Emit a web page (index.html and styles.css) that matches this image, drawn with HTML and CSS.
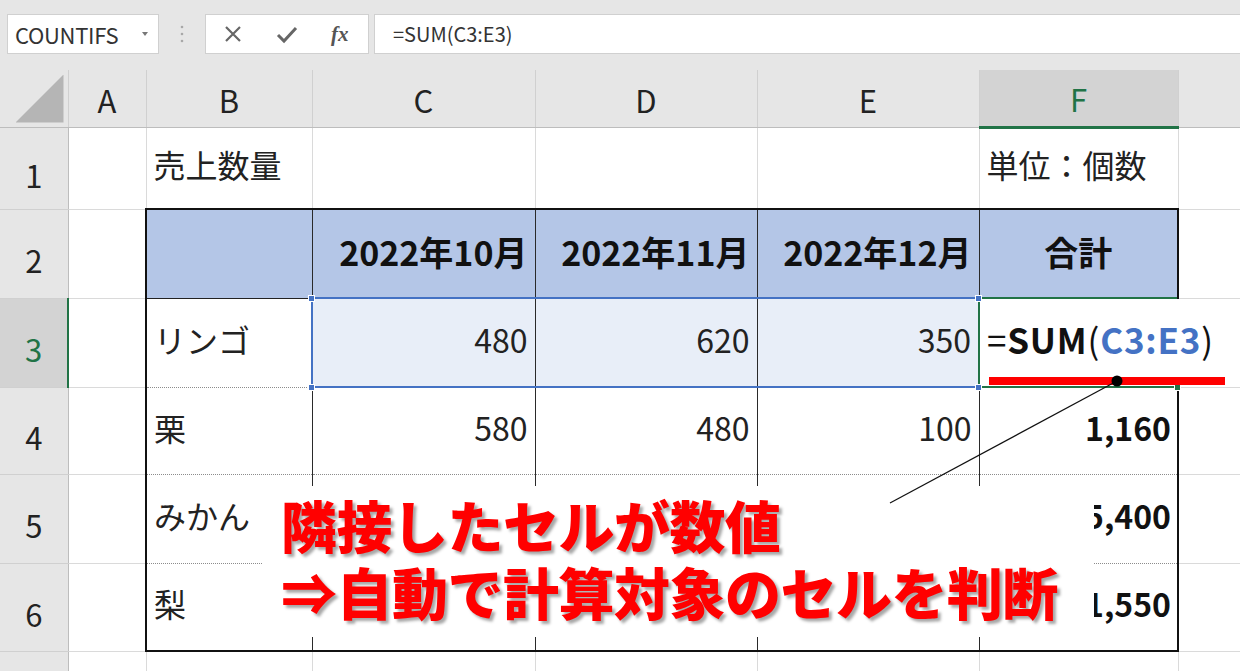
FILE: index.html
```html
<!DOCTYPE html>
<html lang="ja">
<head>
  <meta charset="UTF-8">
  <meta name="viewport" content="width=device-width, initial-scale=1.0">
  <title>SUM 自動範囲</title>
  <link rel="stylesheet" href="styles.css">
</head>
<body>
  <div class="topbar">
    <div class="namebox">COUNTIFS<span class="caret"></span></div>
    <div class="grip">
      <svg width="4" height="18" viewBox="0 0 4 18"><circle cx="2" cy="2" r="1.3" fill="#a8a8a8"/><circle cx="2" cy="9" r="1.3" fill="#a8a8a8"/><circle cx="2" cy="16" r="1.3" fill="#a8a8a8"/></svg>
    </div>
    <div class="fxbox">
      <svg class="ico" width="20" height="20" viewBox="0 0 20 20"><path d="M3 3 L17 17 M17 3 L3 17" stroke="#666" stroke-width="2.2" fill="none"/></svg>
      <svg class="ico" width="22" height="20" viewBox="0 0 22 20"><path d="M2 11 L8 17 L20 4" stroke="#666" stroke-width="3" fill="none"/></svg>
      <span class="fx">fx</span>
    </div>
    <div class="formula">=SUM(C3:E3)</div>
  </div>

  <div class="sheet">
    <table class="grid">
      <colgroup>
        <col class="w-hdr"><col class="w-a"><col class="w-b"><col class="w-c"><col class="w-d"><col class="w-e"><col class="w-f"><col class="w-g">
      </colgroup>
      <tr class="r-head">
        <th class="corner"><span class="tri"></span></th>
        <th>A</th><th>B</th><th>C</th><th>D</th><th>E</th><th class="on">F</th><th></th>
      </tr>
      <tr class="r1">
        <th class="rh">1</th>
        <td></td><td>売上数量</td><td></td><td></td><td></td><td>単位：個数</td><td></td>
      </tr>
      <tr class="r2">
        <th class="rh">2</th>
        <td></td>
        <td class="t hd tl tt"></td>
        <td class="t hd tt num">2022年10月</td>
        <td class="t hd tt num">2022年11月</td>
        <td class="t hd tt num">2022年12月</td>
        <td class="t hd tt tr mid">合計</td>
        <td></td>
      </tr>
      <tr class="r3">
        <th class="rh on">3</th>
        <td></td>
        <td class="t tl">リンゴ</td>
        <td class="t sel sl num">480</td>
        <td class="t sel num">620</td>
        <td class="t sel num">350</td>
        <td class="t act"><span class="eq">=</span><b>SUM</b>(<b class="ref">C3:E3</b>)</td>
        <td class="over"></td>
      </tr>
      <tr class="r4">
        <th class="rh">4</th>
        <td></td>
        <td class="t tl">栗</td>
        <td class="t num">580</td>
        <td class="t num">480</td>
        <td class="t num">100</td>
        <td class="t tr num total">1,160</td>
        <td></td>
      </tr>
      <tr class="r5">
        <th class="rh">5</th>
        <td></td>
        <td class="t tl">みかん</td>
        <td class="t"></td>
        <td class="t"></td>
        <td class="t"></td>
        <td class="t tr num total">5,400</td>
        <td></td>
      </tr>
      <tr class="r6">
        <th class="rh">6</th>
        <td></td>
        <td class="t tl tb">梨</td>
        <td class="t tb"></td>
        <td class="t tb"></td>
        <td class="t tb"></td>
        <td class="t tb tr num total">1,550</td>
        <td></td>
      </tr>
      <tr class="r7">
        <th class="rh">7</th>
        <td></td><td></td><td></td><td></td><td></td><td></td><td></td>
      </tr>
    </table>

    <span class="handle h-c-top"></span>
    <span class="handle h-c-bot"></span>
    <span class="handle h-e-top"></span>
    <span class="handle h-e-bot"></span>
    <span class="handle green h-f-bot"></span>

    <div class="underline"></div>

    <div class="callout">
      <p>隣接したセルが数値</p>
      <p>⇒自動で計算対象のセルを判断</p>
    </div>

    <svg class="pointer" width="1240" height="601" viewBox="0 0 1240 601">
      <line x1="1117" y1="311" x2="890" y2="433" stroke="#111" stroke-width="1.2"/>
      <circle cx="1117" cy="311" r="5.5" fill="#000"/>
    </svg>
  </div>
</body>
</html>
```

FILE: styles.css
```css
/* Reset */
* {
  margin: 0;
  padding: 0;
  box-sizing: border-box;
}

body {
  width: 1240px;
  height: 671px;
  overflow: hidden;
  background: #fff;
  font-family: "Noto Sans CJK JP", "Noto Sans", sans-serif;
  color: #222;
}

/* Formula bar */
.topbar {
  height: 70px;
  background: #e6e6e6;
  display: flex;
  align-items: flex-start;
  padding-top: 14px;
}

.namebox {
  margin-left: 7px;
  width: 152px;
  height: 40px;
  background: #fff;
  border: 1px solid #d0d0d0;
  display: flex;
  align-items: center;
  padding-left: 7px;
  font-size: 22px;
  color: #333;
  letter-spacing: -0.3px;
}

.caret {
  margin-left: auto;
  margin-right: 10px;
  width: 0;
  height: 0;
  border-left: 3px solid transparent;
  border-right: 3px solid transparent;
  border-top: 4px solid #777;
}

.grip {
  width: 46px;
  height: 40px;
  display: flex;
  justify-content: center;
  align-items: center;
}

.fxbox {
  width: 164px;
  height: 40px;
  background: #fff;
  border: 1px solid #d0d0d0;
  display: flex;
  align-items: center;
  padding-left: 17px;
}

.ico {
  display: block;
}

.ico + .ico {
  margin-left: 33px;
}

.fx {
  margin-left: 33px;
  font-family: "Liberation Serif", serif;
  font-style: italic;
  font-weight: 700;
  font-size: 21px;
  color: #555;
}

.formula {
  flex: 1;
  margin-left: 5px;
  height: 40px;
  background: #fff;
  border: 1px solid #d0d0d0;
  border-right: none;
  padding-left: 18px;
  font-size: 20px;
  line-height: 38px;
  color: #333;
}

/* Sheet */
.sheet {
  position: relative;
  height: 601px;
  overflow: hidden;
}

.grid {
  width: 1241px;
  table-layout: fixed;
  border-collapse: collapse;
  font-size: 32px;
}

.w-hdr { width: 68px; }
.w-a { width: 78px; }
.w-b { width: 166px; }
.w-c { width: 223px; }
.w-d { width: 222px; }
.w-e { width: 222px; }
.w-f { width: 199px; }
.w-g { width: 63px; }

.r-head { height: 57px; }
.r1 { height: 82px; }
.r2 { height: 89px; }
.r3 { height: 89px; }
.r4 { height: 87px; }
.r5 { height: 89px; }
.r6 { height: 88px; }
.r7 { height: 89px; }

th {
  background: #e6e6e6;
  font-weight: 400;
  font-size: 31px;
  color: #222;
  border-right: 1px solid #d0d0d0;
  border-bottom: 1px solid #bdbdbd;
  padding: 0;
}

.r-head th {
  padding-top: 2px;
}

th.rh {
  border-right: 1px solid #bdbdbd;
  border-bottom: 1px solid #d0d0d0;
  padding-top: 12px;
}

th.on {
  background: #d3d3d3;
  color: #217346;
}

.r-head th.on {
  border-bottom: 3px solid #217346;
}

th.rh.on {
  border-right: 2px solid #217346;
}

.corner {
  position: relative;
}

.tri {
  position: absolute;
  right: 4px;
  bottom: 4px;
  width: 48px;
  height: 48px;
  background: #b5b5b5;
  clip-path: polygon(100% 0, 100% 100%, 0 100%);
}

td {
  border-right: 1px solid #dadada;
  border-bottom: 1px solid #dadada;
  padding: 0 7px 8px;
  vertical-align: middle;
  white-space: nowrap;
  overflow: visible;
  position: relative;
}

/* Table area */
td.t {
  border-right: 1px solid #2a2a2a;
  border-bottom: 1px dotted #8c8c8c;
}

td.hd {
  background: #b4c6e7;
  font-weight: 700;
  font-size: 34px;
  color: #111;
  border-bottom: 1px solid #222;
  padding-bottom: 4px;
}

td.tl { border-left: 2px solid #111; }
td.tt { border-top: 2px solid #111; }
td.tr { border-right: 2px solid #111; }
td.tb { border-bottom: 2px solid #111; }

.num { text-align: right; }
.mid { text-align: center; }

td.total {
  font-weight: 700;
  color: #111;
  padding-right: 6px;
}

td.sel {
  background: #e8eef8;
  border-top: 2px solid #4472c4;
  border-bottom: 2px solid #4472c4;
}

td.sl { border-left: 2px solid #4472c4; }

td.act {
  border: 2px solid #217346;
  border-right-style: hidden;
  padding-left: 7px;
  color: #111;
  font-size: 35px;
  letter-spacing: 0.8px;
}

.eq,
.act {
  font-weight: 400;
}

.act b {
  font-weight: 700;
}

.act .ref {
  color: #4472c4;
}

td.over {
  border-left-style: hidden;
}

/* Selection handles */
.handle {
  position: absolute;
  width: 7px;
  height: 7px;
  background: #4472c4;
  border: 1px solid #fff;
}

.handle.green { background: #217346; }

.h-c-top { left: 308px; top: 225px; }
.h-c-bot { left: 308px; top: 314px; }
.h-e-top { left: 975px; top: 225px; }
.h-e-bot { left: 975px; top: 314px; }
.h-f-bot { left: 1174px; top: 314px; }

/* Annotations */
.underline {
  position: absolute;
  left: 989px;
  top: 307px;
  width: 236px;
  height: 8px;
  background: #ff0000;
}

.callout {
  position: absolute;
  left: 263px;
  top: 416px;
  width: 831px;
  height: 151px;
  background: #fff;
  padding: 4px 0 0 18px;
  font-size: 56px;
  font-weight: 900;
  line-height: 67px;
  color: #ff0000;
  letter-spacing: -0.5px;
  text-shadow: 3px 3px 3px rgba(0, 0, 0, 0.35);
  white-space: nowrap;
}

.pointer {
  position: absolute;
  left: 0;
  top: 0;
  pointer-events: none;
}
```
